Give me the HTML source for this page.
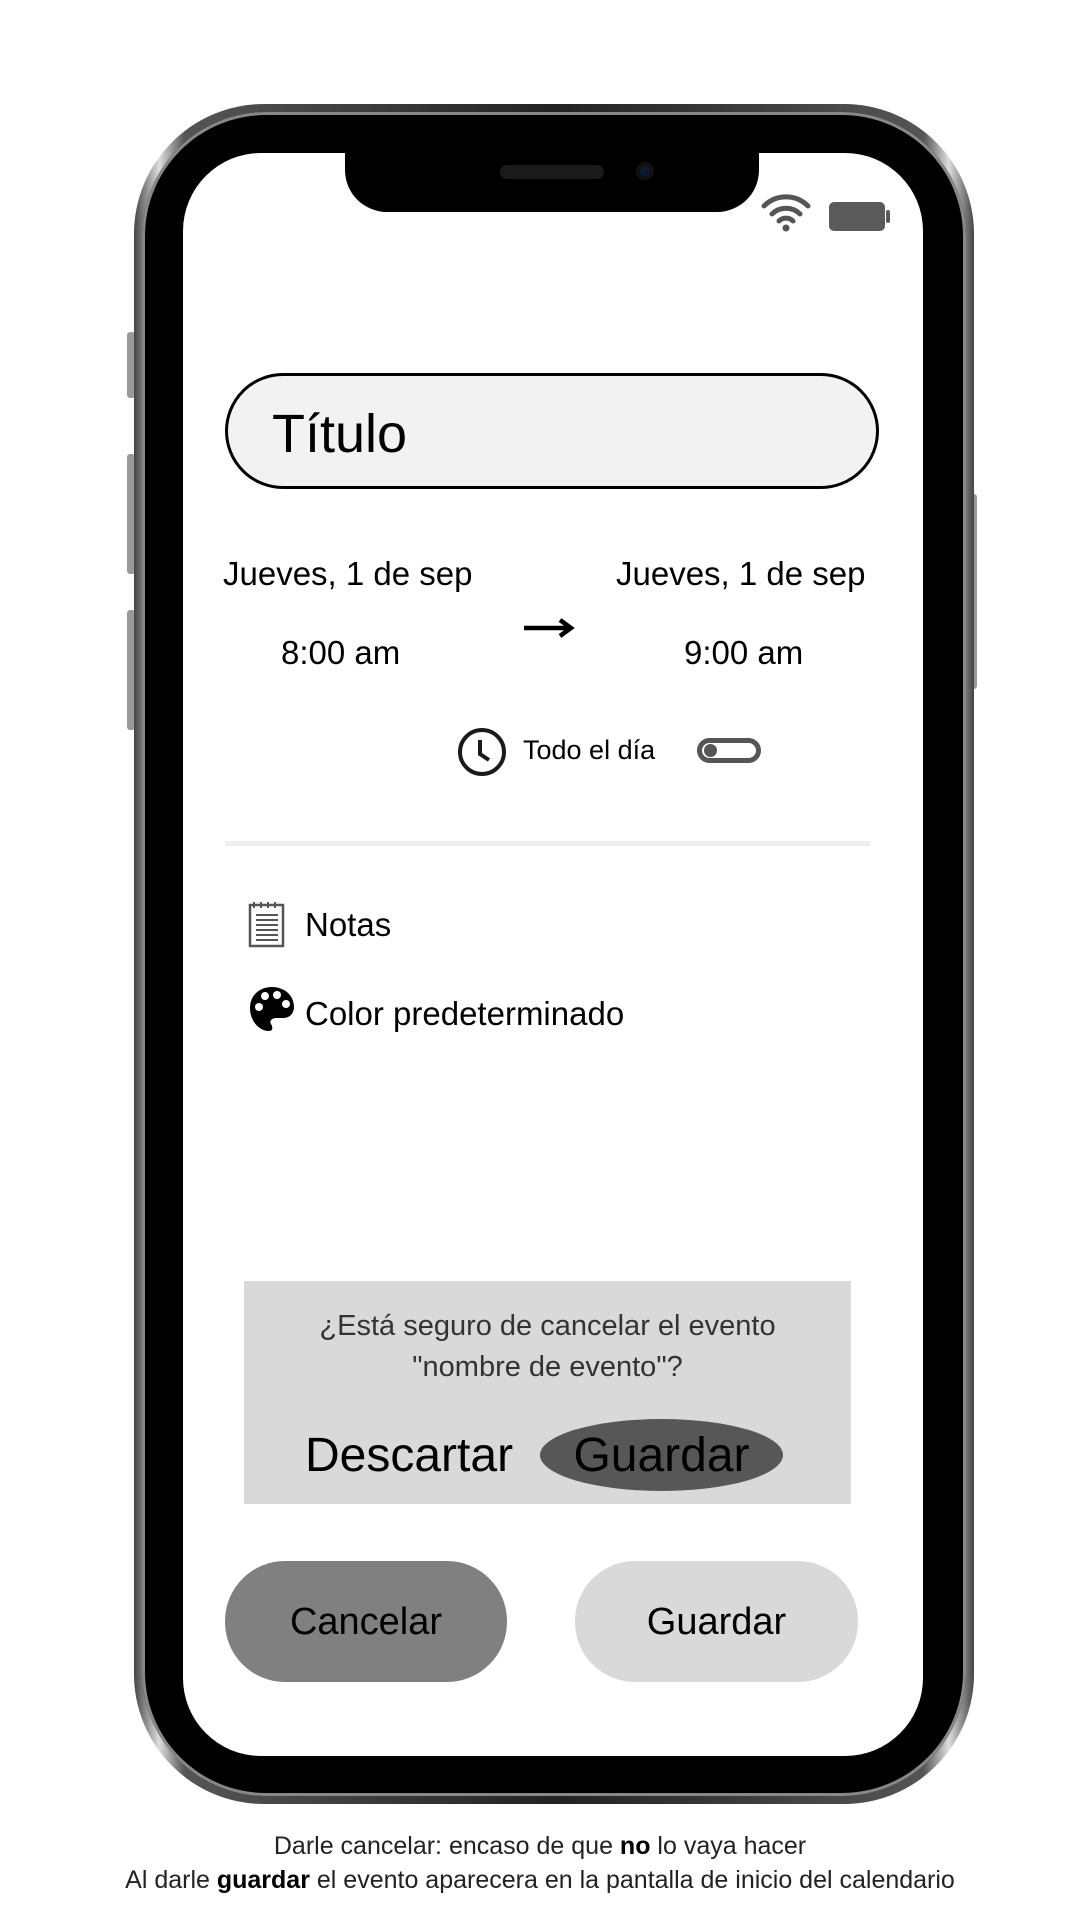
<!DOCTYPE html>
<html><head><meta charset="utf-8"><style>
*{margin:0;padding:0;box-sizing:border-box}
body{width:1080px;height:1920px;background:#fff;position:relative;overflow:hidden;font-family:"Liberation Sans","DejaVu Sans",sans-serif;color:#000}
.a{position:absolute}
.t{position:absolute;white-space:nowrap;line-height:1}
</style></head><body>
<div class="a" style="left:127px;top:332px;width:8px;height:66px;background:#999;border-radius:3px"></div>
<div class="a" style="left:127px;top:454px;width:8px;height:120px;background:#999;border-radius:3px"></div>
<div class="a" style="left:127px;top:610px;width:8px;height:120px;background:#999;border-radius:3px"></div>
<div class="a" style="left:968px;top:494px;width:9px;height:195px;background:#999;border-radius:3px"></div>
<div class="a" style="left:134px;top:104px;width:840px;height:1700px;border-radius:130px;background:linear-gradient(90deg,#444,#ddd 3%,#555 6%,#222 50%,#555 94%,#ddd 97%,#444);"></div>
<div class="a" style="left:142px;top:112px;width:824px;height:1684px;border-radius:124px;background:#000;box-shadow:inset 0 0 0 3px #888"></div>
<div class="a" style="left:183px;top:153px;width:740px;height:1603px;border-radius:78px;background:#fff"></div>
<div class="a" style="left:345px;top:140px;width:414px;height:72px;background:#000;border-radius:0 0 42px 42px"></div>
<div class="a" style="left:500px;top:165px;width:104px;height:14px;background:#1a1a1a;border-radius:7px"></div>
<div class="a" style="left:636px;top:162px;width:18px;height:18px;background:#0b1a33;border-radius:50%;box-shadow:inset 0 0 0 4px #111"></div>
<svg class="a" style="left:760px;top:190px" width="52" height="42" viewBox="0 0 52 42">
<path d="M4 16 A31 31 0 0 1 48 16" fill="none" stroke="#555" stroke-width="5" stroke-linecap="round"/>
<path d="M12 24 A20 20 0 0 1 40 24" fill="none" stroke="#555" stroke-width="5" stroke-linecap="round"/>
<path d="M19 31 A10 10 0 0 1 33 31" fill="none" stroke="#555" stroke-width="5" stroke-linecap="round"/>
<circle cx="26" cy="38" r="3.5" fill="#555"/></svg>
<div class="a" style="left:829px;top:202px;width:56px;height:29px;background:#5a5a5a;border-radius:5px"></div>
<div class="a" style="left:886px;top:210px;width:4px;height:13px;background:#5a5a5a;border-radius:2px"></div>
<div class="a" style="left:225px;top:373px;width:654px;height:116px;border:3px solid #000;border-radius:58px;background:#f2f2f2"></div>
<div class="t" style="left:272px;top:407px;font-size:54px">Título</div>
<div class="t" style="left:223px;top:557px;font-size:33px">Jueves, 1 de sep</div>
<div class="t" style="left:616px;top:557px;font-size:33px">Jueves, 1 de sep</div>
<div class="t" style="left:281px;top:636px;font-size:33px">8:00 am</div>
<div class="t" style="left:684px;top:636px;font-size:33px">9:00 am</div>
<svg class="a" style="left:522px;top:615px" width="54" height="26" viewBox="0 0 54 26"><path d="M2 13 H48 M38 5 L49 13 L38 21" fill="none" stroke="#000" stroke-width="4.5"/></svg>
<svg class="a" style="left:456px;top:726px" width="52" height="52" viewBox="0 0 52 52"><circle cx="26" cy="26" r="22" fill="none" stroke="#1a1a1a" stroke-width="4"/><path d="M24 14 V28 L33 34" fill="none" stroke="#1a1a1a" stroke-width="4"/></svg>
<div class="t" style="left:523px;top:737px;font-size:27px">Todo el día</div>
<div class="a" style="left:697px;top:738px;width:64px;height:25px;border:5px solid #555;border-radius:13px"></div>
<div class="a" style="left:704px;top:744px;width:13px;height:13px;background:#555;border-radius:50%"></div>
<div class="a" style="left:225px;top:841px;width:645px;height:5px;background:#eee"></div>
<svg class="a" style="left:248px;top:900px" width="38" height="48" viewBox="0 0 38 48"><rect x="2" y="5" width="33" height="41" fill="none" stroke="#555" stroke-width="2.5"/><path d="M6 2V8 M13 2V8 M20 2V8 M27 2V8 M8 15H30 M8 20H30 M8 25H30 M8 30H30 M8 35H30 M8 40H30" stroke="#555" stroke-width="2"/></svg>
<div class="t" style="left:305px;top:908px;font-size:33px">Notas</div>
<svg class="a" style="left:248px;top:985px" width="48" height="48" viewBox="0 0 48 48"><path d="M24 2C11 2 2 11 2 23C2 36 11 46 21 46C25 46 25 42 23 39C21 36 24 33 28 33H35C42 33 46 28 46 22C46 10 36 2 24 2Z" fill="#000"/><circle cx="11" cy="22" r="4" fill="#fff"/><circle cx="17" cy="11" r="4" fill="#fff"/><circle cx="29" cy="10" r="4" fill="#fff"/><circle cx="38" cy="19" r="4" fill="#fff"/></svg>
<div class="t" style="left:305px;top:997px;font-size:33px">Color predeterminado</div>
<div class="a" style="left:244px;top:1281px;width:607px;height:223px;background:#d9d9d9"></div>
<div class="t" style="left:244px;width:607px;text-align:center;top:1312px;font-size:29px;color:#333">¿Está seguro de cancelar el evento</div>
<div class="t" style="left:244px;width:607px;text-align:center;top:1353px;font-size:29px;color:#333">"nombre de evento"?</div>
<div class="t" style="left:305px;top:1432px;font-size:48px">Descartar</div>
<div class="a" style="left:540px;top:1419px;width:243px;height:72px;background:#575757;border-radius:50%"></div>
<div class="t" style="left:540px;width:243px;text-align:center;top:1432px;font-size:48px">Guardar</div>
<div class="a" style="left:225px;top:1561px;width:282px;height:121px;background:#808080;border-radius:60px"></div>
<div class="t" style="left:225px;width:282px;text-align:center;top:1603px;font-size:38px">Cancelar</div>
<div class="a" style="left:575px;top:1561px;width:283px;height:121px;background:#d9d9d9;border-radius:60px"></div>
<div class="t" style="left:575px;width:283px;text-align:center;top:1603px;font-size:38px">Guardar</div>
<div class="t" style="left:0;width:1080px;text-align:center;top:1834px;font-size:25px;color:#222">Darle cancelar: encaso de que <b style="color:#000">no</b> lo vaya hacer</div>
<div class="t" style="left:0;width:1080px;text-align:center;top:1868px;font-size:25px;color:#222">Al darle <b style="color:#000">guardar</b> el evento aparecera en la pantalla de inicio del calendario</div>
</body></html>
